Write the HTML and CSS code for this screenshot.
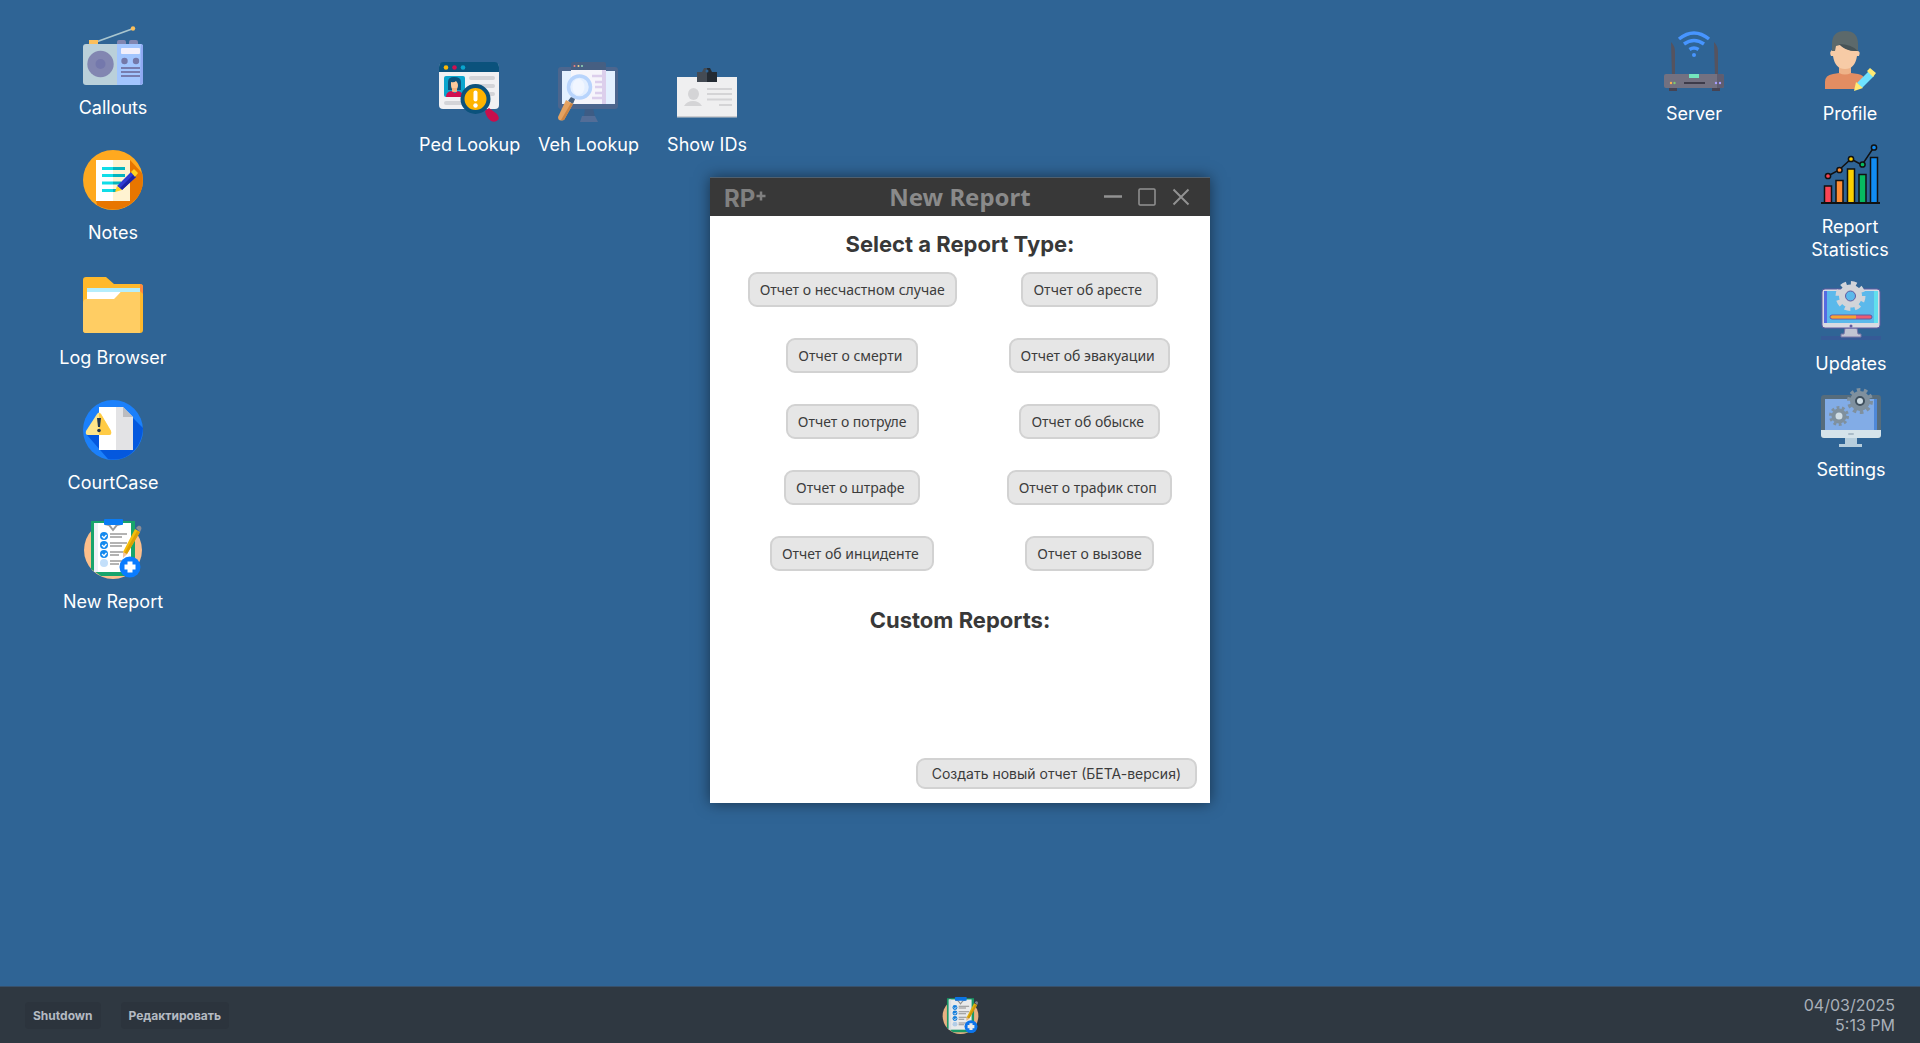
FILE: index.html
```html
<!DOCTYPE html>
<html lang="ru">
<head>
    <meta charset="UTF-8">
    <meta name="viewport" content="width=device-width, initial-scale=1.0">
    <title>New Report</title>
    <link rel="stylesheet" href="styles.css">
</head>
<body>
    <!-- shared by the desktop shortcut and the taskbar -->
    <svg class="sprites" aria-hidden="true">
        <symbol id="reportIcon" viewBox="0 0 60 60">
            <circle cx="30" cy="31" r="29" fill="#fdbf8b"/>
            <path d="M8 2h44v55H18L8 50z" fill="#18a46c"/>
            <path d="M11 4h37v49H11z" fill="#fff"/>
            <path d="M11 4h4v49h-4z" fill="#eef1f6"/>
            <path d="M22 5l4 1 4 5 4-5 4-1" fill="none" stroke="#9a9a9a" stroke-width="2"/>
            <rect x="21" y="0" width="19" height="6" rx="1" fill="#0a7cf5"/>
            <circle cx="21" cy="17" r="4" fill="#1489ef"/>
            <circle cx="21" cy="26" r="4" fill="#1489ef"/>
            <circle cx="21" cy="35" r="4" fill="#1489ef"/>
            <circle cx="21" cy="44" r="4" fill="#c3dffa"/>
            <path d="M19 17l2 2 2.500-3M19 26l2 2 2.500-3M19 35l2 2 2.500-3" fill="none" stroke="#fff" stroke-width="1.300"/>
            <path d="M27 15h17M27 18h12M27 24h17M27 27h12M27 33h13M27 36h9M27 42h12M27 45h9" stroke="#9a9a9a" stroke-width="1.700"/>
            <path d="M52 10l5 3-13 22-4 3 0-5z" fill="#f5bd0c"/>
            <path d="M54 12l3 1-13 22-3 0z" fill="#dda006"/>
            <path d="M53 9l2-2c3-1 4 2 3 4l-1 2z" fill="#8b8b93"/>
            <path d="M40 33l4 2-4 4z" fill="#f3c4a0"/>
            <circle cx="47" cy="48" r="10.500" fill="#0a7cff"/>
            <path d="M44.500 42.500h5v3h3v5h-3v3h-5v-3h-3v-5h3z" fill="#fff"/>
        </symbol>
    </svg>

    <main class="desktop">
        <!-- left side -->
        <button class="shortcut callouts">
            <svg viewBox="0 0 60 60">
                <path d="M13 17L49 4" stroke="#a9c6cf" stroke-width="1.800"/>
                <circle cx="50" cy="3.500" r="2.200" fill="#fbbf5b"/>
                <rect x="6" y="15" width="9" height="6" fill="#fbbf5b"/>
                <path d="M34 20v-3q0-2 2-2h5q2 0 2 2v3zM46 20v-3q0-2 2-2h5q2 0 2 2v3z" fill="#8286b1"/>
                <rect x="0" y="19" width="60" height="41" rx="3" fill="#bad0da"/>
                <path d="M34 19h23q3 0 3 3v35q0 3-3 3H34z" fill="#a2c5fe"/>
                <path d="M58 19q2 0 2 3v35q0 3-3 3z" fill="#8fa8f1"/>
                <circle cx="17.500" cy="39" r="13.200" fill="#8286b1"/>
                <circle cx="17.500" cy="39" r="5" fill="#7478ac"/>
                <rect x="38" y="23" width="19" height="6" rx="1" fill="#f2effb"/>
                <circle cx="41.500" cy="36" r="3.200" fill="#7478a9"/>
                <circle cx="53" cy="36" r="3.200" fill="#7478a9"/>
                <path d="M38 43h19M38 47h19M38 51h19" stroke="#777cae" stroke-width="2"/>
            </svg>
            <span>Callouts</span>
        </button>
        <button class="shortcut notes">
            <svg viewBox="0 0 60 60">
                <circle cx="30" cy="30" r="30" fill="#ffa91f"/>
                <path d="M47 10l12 13q4 19-10 30-16 12-35 2l-1-5z" fill="#e87600"/>
                <rect x="13" y="10" width="17" height="41" fill="#fff"/>
                <rect x="30" y="10" width="17" height="41" fill="#fff3d1"/>
                <path d="M19 18.500h11M19 25.500h11M19 33h11M19 40.500h11" stroke="#10dde8" stroke-width="3"/>
                <path d="M30 18.500h12M30 25.500h12M30 33h8M30 40.500h3" stroke="#05b4bf" stroke-width="3"/>
                <path d="M34 36l14-14 5 5-14 13z" fill="#2f3ad2"/>
                <path d="M37 38l14-14 2 3-14 13z" fill="#1b22a4"/>
                <path d="M48 22l3-3 4 4-3 4zM34 36l5 4-7 2z" fill="#ffd21f"/>
            </svg>
            <span>Notes</span>
        </button>
        <button class="shortcut logs">
            <svg viewBox="0 0 60 60">
                <path d="M0 5q0-3 3-3h20l8 7h26q3 0 3 3v43q0 3-3 3H3q-3 0-3-3z" fill="#ffb92b"/>
                <path d="M57 9q3 0 3 3v7l-3-3z" fill="#ff8a3c"/>
                <path d="M4 13h53v4H4z" fill="#b5eefc"/>
                <path d="M4 17h34l-7 8H4z" fill="#fff"/>
                <path d="M0 28q0-4 4-4h27l7-7h19v41H3q-3 0-3-3z" fill="#ffcd63"/>
            </svg>
            <span>Log Browser</span>
        </button>
        <button class="shortcut court">
            <svg viewBox="0 0 60 60">
                <circle cx="30" cy="30" r="30" fill="#1b80fb"/>
                <path d="M49 17l11 11q-1 18-14 27-9 6-21 4L4 35z" fill="#0458de"/>
                <path d="M16 7h17v43H16z" fill="#fff"/>
                <path d="M33 7h7l10 10v33H33z" fill="#e3e3e5"/>
                <path d="M40 7l10 10H40z" fill="#bcbcbf"/>
                <path d="M14 14q2-3 4 0l10 17q1 4-2 4H5q-3 0-2-4z" fill="#ffe58a"/>
                <path d="M16 13q1 0 2 1l10 17q1 4-2 4H16z" fill="#ffcb45"/>
                <path d="M14 18h4l-1 9h-2z" fill="#24384f"/>
                <circle cx="16" cy="30.500" r="1.800" fill="#24384f"/>
            </svg>
            <span>CourtCase</span>
        </button>
        <button class="shortcut new-report">
            <svg viewBox="0 0 60 60"><use href="#reportIcon"/></svg>
            <span>New Report</span>
        </button>

        <!-- lookups -->
        <button class="shortcut ped">
            <svg viewBox="0 0 60 60">
                <rect x="0" y="1" width="60" height="46" rx="4" fill="#f1f1f3"/>
                <path d="M0 10V5q0-5 5-5h50q5 0 5 5v5z" fill="#0b527c"/>
                <circle cx="7" cy="5.500" r="2.300" fill="#fdb805"/>
                <circle cx="15.500" cy="5.500" r="2.300" fill="#d1104f"/>
                <circle cx="24" cy="5.500" r="2.300" fill="#0aa5ce"/>
                <rect x="5" y="14" width="21" height="21" rx="2" fill="#0aa5ce"/>
                <path d="M9 28V20q0-5 6-5 7 0 7 5v8z" fill="#0b527c"/>
                <path d="M12 20q3 1 5-1 2 2 2 4 0 5-3.500 5T12 23z" fill="#fcc99b"/>
                <path d="M13 26h5v4h-5z" fill="#f2b27f"/>
                <path d="M7 35q0-5 5-6l4 2 3-2q5 1 5 6z" fill="#d1104f"/>
                <path d="M32 16h22M36 24h18M48 32h6M7 41h16" stroke="#d3d4d8" stroke-width="4" stroke-linecap="round"/>
                <path d="M46 49l4-3 8 6q3 4 1 6-3 3-7 1-5-4-6-10z" fill="#c90e4c"/>
                <circle cx="36.500" cy="37" r="13" fill="#fdb300" stroke="#0b527c" stroke-width="4"/>
                <path d="M36.500 30.500v7" stroke="#fff" stroke-width="4" stroke-linecap="round"/>
                <circle cx="36.500" cy="43.500" r="2.200" fill="#fff"/>
            </svg>
            <span>Ped Lookup</span>
        </button>
        <button class="shortcut veh">
            <svg viewBox="0 0 60 60">
                <path d="M27 46h8l2 9h-11z" fill="#3d5c85"/>
                <path d="M22 60l2-6h13l3 6z" fill="#536d97"/>
                <rect x="0" y="5" width="60" height="42" rx="3" fill="#4c668e"/>
                <path d="M4 9h53v33H4z" fill="#e3f0ff"/>
                <path d="M13 8V2q0-2 2-2h31q2 0 2 2v6z" fill="#465f82"/>
                <path d="M13 8h31v34H13z" fill="#f6f5fb"/>
                <path d="M44 8h4v34h-4z" fill="#dccfec"/>
                <circle cx="16.500" cy="4" r="1" fill="#f18080"/>
                <circle cx="20.500" cy="4" r="1" fill="#efd38a"/>
                <circle cx="24" cy="4" r="1" fill="#94d9b8"/>
                <path d="M34 14h11M37 20h8M37 25h8M37 31h8M34 36h11" stroke="#dccfec" stroke-width="2.500"/>
                <circle cx="21.500" cy="25" r="11" fill="#e4efff" stroke="#b8d4fc" stroke-width="3.500"/>
                <ellipse cx="20.500" cy="25" rx="6" ry="8" fill="#f1f6ff"/>
                <path d="M13 35l4 2-2 5-5-3z" fill="#49617f"/>
                <path d="M8 38l7 4-9 16q-6 2-6-3z" fill="#e5a260"/>
                <path d="M13 41l2 1-9 16-3 0z" fill="#cd8442"/>
            </svg>
            <span>Veh Lookup</span>
        </button>
        <button class="shortcut ids">
            <svg viewBox="0 0 60 60">
                <path d="M0 15h60v40H0z" fill="#efeff0"/>
                <path d="M0 54h60v1.500H0z" fill="#cccccf"/>
                <path d="M20 10h5l2-4h3v14H20z" fill="#444b54"/>
                <path d="M30 6h3l2 4h5v10H30z" fill="#242b33"/>
                <circle cx="30" cy="9" r="1.500" fill="#2f6495"/>
                <ellipse cx="16.500" cy="32" rx="5.500" ry="6" fill="#d4d4d6"/>
                <path d="M7 44q3-5 9-5t9 5z" fill="#d4d4d6"/>
                <path d="M30 27h25M30 32h25M30 37.500h25M42 43h13" stroke="#d4d4d6" stroke-width="2"/>
            </svg>
            <span>Show IDs</span>
        </button>

        <!-- right side -->
        <button class="shortcut server">
            <svg viewBox="0 0 60 60">
                <path d="M15 8q15-12 30 0M20 13q10-7 20 0M25.500 18.500q4.500-3 9 0" fill="none" stroke="#4795ff" stroke-width="3.500"/>
                <circle cx="30" cy="24" r="2" fill="#4795ff"/>
                <path d="M7 11q4 4 4 10v24H8zM50 11q4 4 4 10v24h-3z" fill="#55535f"/>
                <path d="M5 55h8v5H5zM48 55h8v5h-8z" fill="#464454"/>
                <rect x="0" y="43" width="60" height="14" rx="2" fill="#737181"/>
                <path d="M53 43h5q2 0 2 2v10q0 2-2 2h-5z" fill="#5f5d70"/>
                <rect x="25" y="43" width="10" height="4" fill="#74e5bd"/>
                <rect x="20" y="51" width="21" height="2" fill="#3d3b4a"/>
                <circle cx="7" cy="52" r="1.200" fill="#ffb04e"/>
                <circle cx="10.500" cy="52" r="1.200" fill="#81c96e"/>
                <circle cx="52" cy="52" r="1.200" fill="#a69dff"/>
                <circle cx="56" cy="52" r="1.200" fill="#a69dff"/>
            </svg>
            <span>Server</span>
        </button>
        <button class="shortcut profile">
            <svg viewBox="0 0 60 60">
                <path d="M19 35h12v9l-6 4-6-4z" fill="#eeb287"/>
                <path d="M5 58V51q0-7 8-8l6-1q6 3 12 0l7 1q6 1 7 6l-9 9z" fill="#e38d62"/>
                <path d="M14 12h23v8q4 0 2 5h-2q-2 13-12 13T13 25h-2q-2-4 1-6z" fill="#f7cba6"/>
                <path d="M12 20V13Q12 0 25 0t13 13v7q-11 0-18-6l-4 1-1 5z" fill="#5c696b"/>
                <path d="M19 13q12 0 19 7-12 1-19-7z" fill="#465357"/>
                <path d="M37 52l12-12 5 5-12 12z" fill="#6ee2ff"/>
                <path d="M47 40l3-3 6 5-3 4zM36 51l7 6-9 3z" fill="#ffea73"/>
            </svg>
            <span>Profile</span>
        </button>
        <button class="shortcut stats">
            <svg viewBox="0 0 60 60">
                <path d="M8 32l11-6 12-11 11 6L54 3" fill="none" stroke="#111" stroke-width="1.500"/>
                <g stroke="#111" stroke-width="1.500">
                    <circle cx="8" cy="32" r="2.600" fill="#fb4455"/>
                    <circle cx="19.500" cy="26" r="2.600" fill="#ff8d34"/>
                    <circle cx="31" cy="15" r="2.600" fill="#fcd000"/>
                    <circle cx="42.500" cy="20.500" r="2.600" fill="#07ba60"/>
                    <circle cx="54" cy="3.500" r="2.600" fill="#118cf2"/>
                    <path d="M4.500 59V42h7v17z" fill="#fb4455"/>
                    <path d="M16 59V36.500h7V59z" fill="#ff8d34"/>
                    <path d="M27.500 59V25h7v34z" fill="#fcd000"/>
                    <path d="M39 59V30.500h7V59z" fill="#07ba60"/>
                    <path d="M50.500 59V13.500h7V59z" fill="#118cf2"/>
                </g>
                <path d="M1 59h59" stroke="#111" stroke-width="2"/>
            </svg>
            <span>Report Statistics</span>
        </button>
        <button class="shortcut updates">
            <svg viewBox="0 0 60 60">
                <rect x="0" y="55" width="60" height="4" fill="#365a96"/>
                <path d="M24 47h12l1 6h3v3H20v-3h3z" fill="#c1c4d2" stroke="#7874a6" stroke-width="1"/>
                <rect x="1" y="8" width="58" height="39" rx="3" fill="#d9dbe2" stroke="#625ba0" stroke-width="1"/>
                <path d="M3 10h54v32H3z" fill="#5bb9eb"/>
                <path d="M3 10h3v32H3z" fill="#566be1"/>
                <path d="M53 10h4v32h-4z" fill="#61dfec"/>
                <rect x="9" y="34" width="42" height="4" rx="2" fill="#ec5b73" stroke="#625ba0" stroke-width="1"/>
                <path d="M11 34.500h24v3H11q-3-1.500 0-3z" fill="#f4a532"/>
                <circle cx="29.500" cy="15" r="12.500" fill="none" stroke="#d2d4d9" stroke-width="5" stroke-dasharray="5.500 4.317"/>
                <circle cx="29.500" cy="15" r="8" fill="none" stroke="#d2d4d9" stroke-width="7"/>
                <circle cx="29.500" cy="15" r="5" fill="#5bb9eb" stroke="#625ba0" stroke-width="1"/>
                <circle cx="30" cy="45" r="1.500" fill="#625ba0"/>
            </svg>
            <span>Updates</span>
        </button>
        <button class="shortcut settings">
            <svg viewBox="0 0 60 60">
                <path d="M24 50h12v7h5v3H18v-3h6z" fill="#b6cddc"/>
                <rect x="0" y="8" width="60" height="43" rx="3" fill="#566c7c"/>
                <path d="M4 12h52v31H4z" fill="#82ace6"/>
                <path d="M53 12h3v31h-3z" fill="#4f88d7"/>
                <path d="M0 43h60v5q0 3-3 3H3q-3 0-3-3z" fill="#d5e3ea"/>
                <rect x="27" y="46" width="6" height="2" rx="1" fill="#aabcc9"/>
                <circle cx="39" cy="14" r="11" fill="none" stroke="#7f909e" stroke-width="4" stroke-dasharray="3.500 3.412"/>
                <circle cx="39" cy="14" r="7.500" fill="#3f505e" stroke="#7f909e" stroke-width="5"/>
                <circle cx="39" cy="14" r="3" fill="#d0dde5"/>
                <circle cx="18" cy="29" r="8.500" fill="none" stroke="#7f909e" stroke-width="3" stroke-dasharray="2.800 2.541"/>
                <circle cx="18" cy="29" r="5.500" fill="#d0dde5" stroke="#7f909e" stroke-width="4"/>
            </svg>
            <span>Settings</span>
        </button>

        <section class="window">
            <header class="titlebar">
                <svg class="logo" viewBox="0 0 52 34">
                    <text class="logo-text" x="0" y="27">RP</text>
                    <path d="M32.500 16h9M37 11.500v9" stroke="#808080" stroke-width="2.500"/>
                </svg>
                <h1>New Report</h1>
                <div class="window-buttons">
                    <button aria-label="Minimize"><svg viewBox="0 0 20 20"><path d="M1 9.500h18" stroke-width="2.500"/></svg></button>
                    <button aria-label="Maximize"><svg viewBox="0 0 20 20"><rect x="2" y="2" width="16" height="16" rx="1"/></svg></button>
                    <button aria-label="Close"><svg viewBox="0 0 20 20"><path d="M2.500 2.500l15 15M17.500 2.500l-15 15" stroke-width="2"/></svg></button>
                </div>
            </header>
            <div class="window-body">
                <h2>Select a Report Type:</h2>
                <div class="report-grid">
                    <button class="btn">Отчет о несчастном случае</button>
                    <button class="btn">Отчет об аресте&nbsp;</button>
                    <button class="btn">Отчет о смерти&nbsp;</button>
                    <button class="btn">Отчет об эвакуации&nbsp;</button>
                    <button class="btn">Отчет о потруле</button>
                    <button class="btn">Отчет об обыске&nbsp;</button>
                    <button class="btn">Отчет о штрафе&nbsp;</button>
                    <button class="btn">Отчет о трафик стоп&nbsp;</button>
                    <button class="btn">Отчет об инциденте&nbsp;</button>
                    <button class="btn">Отчет о вызове</button>
                </div>
                <h2>Custom Reports:</h2>
                <div class="custom-reports"></div>
                <button class="btn btn-create">Создать новый отчет (БЕТА-версия)</button>
            </div>
        </section>
    </main>

    <footer class="taskbar">
        <div class="task-left">
            <button class="task-btn">Shutdown</button>
            <button class="task-btn">Редактировать</button>
        </div>
        <button class="task-app" aria-label="New Report">
            <svg viewBox="0 0 60 60"><use href="#reportIcon"/></svg>
        </button>
        <div class="clock">
            <div>04/03/2025</div>
            <div>5:13 PM</div>
        </div>
    </footer>
</body>
</html>
```

FILE: styles.css
```css
* {
    box-sizing: border-box;
}
body {
    margin: 0;
    height: 100vh;
    display: flex;
    flex-direction: column;
    overflow: hidden;
    background: #2f6495;
    font-family: Inter, "Noto Sans", sans-serif;
}
button {
    margin: 0;
    padding: 0;
    border: none;
    background: none;
    font-family: inherit;
    cursor: pointer;
}
h1, h2 {
    margin: 0;
}
.sprites {
    position: absolute;
    width: 0;
    height: 0;
}
.desktop {
    position: relative;
    flex: 1;
}

/* desktop shortcuts */
.shortcut {
    position: absolute;
    width: 120px;
    display: flex;
    flex-direction: column;
    align-items: center;
    gap: 11px;
    color: #fff;
    font-size: 18px;
    line-height: 23px;
}
.shortcut span {
    max-width: 100px;
}
.shortcut.logs span {
    max-width: none;
}
.shortcut svg {
    width: 60px;
    height: 60px;
}
.callouts { left: 53px; top: 25px; }
.notes { left: 53px; top: 150px; }
.logs { left: 53px; top: 275px; }
.court { left: 53px; top: 400px; }
.new-report { left: 53px; top: 519px; }
.ped { left: 409px; top: 62px; }
.veh { left: 528px; top: 62px; }
.ids { left: 647px; top: 62px; }
.server { right: 166px; top: 31px; }
.profile { right: 10px; top: 31px; }
.stats { right: 10px; top: 144px; }
.updates { right: 9px; top: 281px; }
.settings { right: 9px; top: 387px; }

.shortcut span {
    white-space: nowrap;
}
.stats span {
    white-space: normal;
}

/* report window */
.window {
    position: absolute;
    top: 177px;
    left: 50%;
    width: 500px;
    transform: translateX(-50%);
    background: #fff;
    box-shadow: 0 0 14px rgba(0, 0, 0, 0.5);
}
.titlebar {
    display: grid;
    grid-template-columns: 1fr auto 1fr;
    align-items: center;
    height: 39px;
    padding: 0 14px;
    background: #383838;
    border-top: 1px solid #50606f;
}
.titlebar h1 {
    color: #8a8a8a;
    font-family: "Noto Sans", sans-serif;
    font-size: 24px;
    line-height: 32px;
}
.logo {
    width: 52px;
    height: 34px;
}
.logo-text {
    fill: #808080;
    font-size: 24px;
    font-weight: 700;
}
.window-buttons {
    display: flex;
    justify-content: flex-end;
    gap: 14px;
    padding-right: 5px;
}
.window-buttons button,
.window-buttons svg {
    display: block;
    width: 20px;
    height: 20px;
}
.window-buttons svg {
    fill: none;
    stroke: #929292;
    stroke-width: 1.5;
}
.window-body {
    display: flex;
    flex-direction: column;
    align-items: center;
    padding: 14px 13px;
}
.window-body h2 {
    color: #383838;
    font-size: 22px;
    line-height: 28px;
}
.report-grid {
    display: grid;
    grid-template-columns: auto auto;
    justify-content: center;
    justify-items: center;
    gap: 31px 50px;
    margin: 14px 0 35px;
}
.btn {
    height: 35px;
    padding: 0 10px;
    background: #e6e6e6;
    border: 2px solid #d2d2d2;
    border-radius: 9px;
    color: #3c3c3c;
    font-family: "Noto Sans", sans-serif;
    font-size: 14px;
    line-height: 20px;
    white-space: nowrap;
}
.custom-reports {
    height: 124px;
}
.btn-create {
    align-self: flex-end;
    height: 31px;
    padding: 0 14px;
    font-family: Inter, sans-serif;
}

/* taskbar */
.taskbar {
    display: grid;
    grid-template-columns: 1fr auto 1fr;
    align-items: center;
    height: 57px;
    padding: 0 25px;
    background: #2f3841;
    border-top: 1px solid #38506a;
}
.task-left {
    display: flex;
    gap: 20px;
}
.task-btn {
    height: 27px;
    padding: 0 8px;
    border-radius: 4px;
    background: #2c343d;
    color: #b4bac2;
    font-size: 12px;
    font-weight: 700;
}
.task-app,
.task-app svg {
    display: block;
    width: 37px;
    height: 37px;
    opacity: 0.95;
}
.clock {
    color: #a9b0b9;
    font-size: 16px;
    line-height: 20px;
    text-align: right;
}
```
